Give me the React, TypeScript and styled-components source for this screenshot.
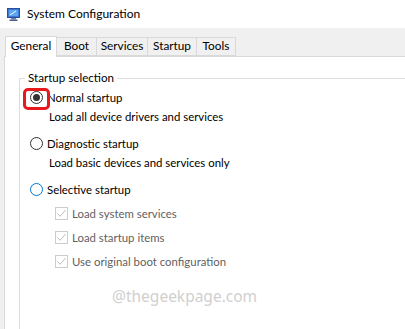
import React from "react";
import styled, { createGlobalStyle } from "styled-components";

const Global = createGlobalStyle`
  html, body { margin: 0; padding: 0; background: #fff; }
  body { font-family: Lato, "Noto Sans", "Liberation Sans", sans-serif; }
  * { box-sizing: border-box; }
`;

const Window = styled.div`
  width: 405px;
  height: 329px;
  overflow: hidden;
  background: #f0f0f0;
  display: flex;
  flex-direction: column;
  font-family: Lato, "Noto Sans", "Liberation Sans", sans-serif;
  font-size: 12px;
  color: #000;
`;

const TitleBar = styled.div`
  height: 28px;
  background: #fff;
  display: flex;
  align-items: center;
  padding-left: 7px;
  gap: 7px;
  flex-shrink: 0;
`;

const Title = styled.span`
  font-size: 12px;
  color: #000;
  margin-top: -2px;
`;

const Body = styled.div`
  flex: 1;
  padding: 7px 0 0 4px;
  display: flex;
  flex-direction: column;
`;

const TabStrip = styled.div`
  display: flex;
  align-items: flex-end;
  height: 21px;
  padding-left: 1px;
  position: relative;
  z-index: 1;
`;

const Tab = styled.div<{ $active?: boolean; $w: number }>`
  height: ${(p) => (p.$active ? "21px" : "19px")};
  margin-bottom: ${(p) => (p.$active ? "-1px" : "0")};
  border: 1px solid #d9d9d9;
  border-bottom: ${(p) => (p.$active ? "none" : "1px solid #d9d9d9")};
  border-left: ${(p) => (p.$active ? "1px solid #d9d9d9" : "none")};
  background: ${(p) => (p.$active ? "#fff" : "#f0f0f0")};
  display: flex;
  align-items: center;
  justify-content: center;
  width: ${(p) => p.$w}px;
  font-size: 11.8px;
  line-height: 1;
  padding-bottom: ${(p) => (p.$active ? "3px" : "1px")};
`;

const Panel = styled.div`
  width: 430px;
  flex: 1;
  background: #fff;
  border: 1px solid #d9d9d9;
  padding: 14px 0 0 14px;
`;

const Group = styled.fieldset`
  margin: 0;
  width: 420px;
  height: 260px;
  border: 1px solid #dcdcdc;
  padding: 0;
  position: relative;
`;

const Legend = styled.legend`
  padding: 0 3px;
  margin-left: 5px;
  font-size: 11.6px;
  line-height: 14px;
`;

const Options = styled.div`
  display: flex;
  flex-direction: column;
  padding: 3px 0 0 10px;
  font-size: 11.4px;
`;

const RadioRow = styled.div<{ $gap?: number }>`
  display: flex;
  align-items: center;
  height: 18px;
  gap: 4px;
  margin-top: ${(p) => p.$gap ?? 0}px;
  position: relative;
`;

const RadioCircle = styled.span<{ $blue?: boolean }>`
  width: 13px;
  height: 13px;
  border-radius: 50%;
  border: 1px solid ${(p) => (p.$blue ? "#0078d7" : "#333")};
  display: flex;
  align-items: center;
  justify-content: center;
  background: #fff;
  flex-shrink: 0;
`;

const Dot = styled.span`
  width: 7px;
  height: 7px;
  border-radius: 50%;
  background: #333;
`;

const Highlight = styled.span`
  position: absolute;
  left: -7px;
  top: 0px;
  width: 27px;
  height: 22px;
  border: 3px solid #e8191d;
  border-radius: 5px;
  pointer-events: none;
`;

const Desc = styled.div`
  margin-left: 19px;
  margin-top: 1px;
  height: 18px;
  display: flex;
  align-items: center;
`;

const CheckRow = styled.div<{ $gap?: number }>`
  display: flex;
  align-items: center;
  height: 18px;
  gap: 4px;
  margin-left: 25px;
  margin-top: ${(p) => p.$gap ?? 0}px;
  color: #5f5f5f;
`;

const CheckBox = styled.span`
  width: 13px;
  height: 13px;
  border: 1px solid #cccccc;
  background: #fff;
  display: flex;
  align-items: center;
  justify-content: center;
  flex-shrink: 0;
`;

const Watermark = styled.div`
  margin-top: 15px;
  margin-left: 82px;
  font-size: 15.5px;
  color: #d0d0d0;
  font-family: "Noto Sans", "Liberation Sans", sans-serif;
`;

const AppIcon = () => (
  <svg width="13" height="13" viewBox="0 0 13 13">
    <rect x="0.5" y="0.5" width="12" height="9" fill="#3b78d8" stroke="#2a4f9a" />
    <rect x="2" y="2" width="9" height="6" fill="#5aa5f0" />
    <path d="M3 7 L9 3" stroke="#fff" strokeWidth="1" />
    <rect x="4" y="10" width="5" height="1.5" fill="#6d7fa8" />
    <rect x="2.5" y="11.5" width="8" height="1.5" fill="#4a5f95" />
  </svg>
);

const Check = () => (
  <svg width="11" height="11" viewBox="0 0 11 11">
    <path d="M1.5 5.5 L4.2 8.3 L9.5 2" fill="none" stroke="#bdbdbd" strokeWidth="1" />
  </svg>
);

const tabs = [
  { label: "General", w: 52 },
  { label: "Boot", w: 40 },
  { label: "Services", w: 51 },
  { label: "Startup", w: 49 },
  { label: "Tools", w: 39 },
];

export default function App() {
  return (
    <>
      <Global />
      <Window>
        <TitleBar>
          <AppIcon />
          <Title>System Configuration</Title>
        </TitleBar>
        <Body>
          <TabStrip>
            {tabs.map((t, i) => (
              <Tab key={t.label} $active={i === 0} $w={t.w}>
                {t.label}
              </Tab>
            ))}
          </TabStrip>
          <Panel>
            <Group>
              <Legend>Startup selection</Legend>
              <Options>
                <RadioRow>
                  <RadioCircle>
                    <Dot />
                  </RadioCircle>
                  <span>Normal startup</span>
                  <Highlight />
                </RadioRow>
                <Desc>Load all device drivers and services</Desc>
                <RadioRow $gap={9}>
                  <RadioCircle />
                  <span>Diagnostic startup</span>
                </RadioRow>
                <Desc>Load basic devices and services only</Desc>
                <RadioRow $gap={9}>
                  <RadioCircle $blue />
                  <span>Selective startup</span>
                </RadioRow>
                <CheckRow $gap={6}>
                  <CheckBox>
                    <Check />
                  </CheckBox>
                  <span>Load system services</span>
                </CheckRow>
                <CheckRow $gap={6}>
                  <CheckBox>
                    <Check />
                  </CheckBox>
                  <span>Load startup items</span>
                </CheckRow>
                <CheckRow $gap={6}>
                  <CheckBox>
                    <Check />
                  </CheckBox>
                  <span>Use original boot configuration</span>
                </CheckRow>
                <Watermark>@thegeekpage.com</Watermark>
              </Options>
            </Group>
          </Panel>
        </Body>
      </Window>
    </>
  );
}
